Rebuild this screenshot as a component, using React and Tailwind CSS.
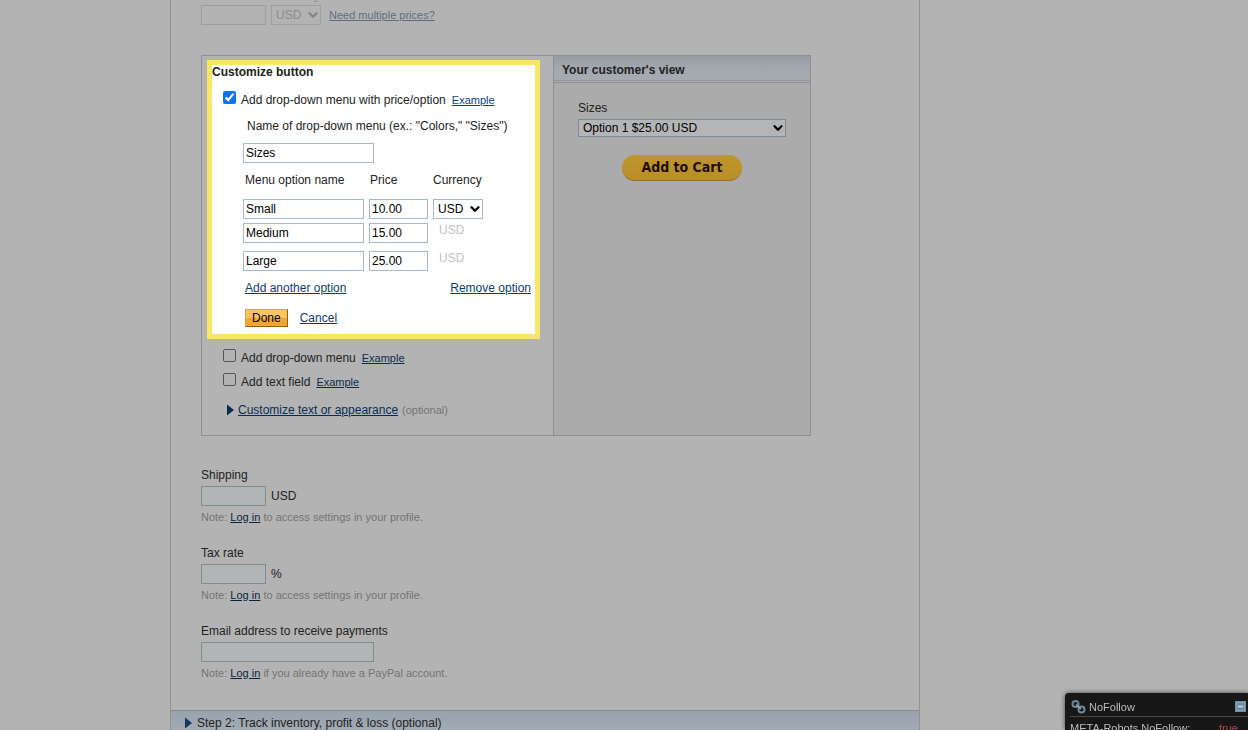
import React, { useState } from 'react';
import { ChevronDown } from 'lucide-react';

const fieldClass = 'h-5 border px-0.5';

const Link = ({ children, small, className = '' }) => (
  <a href="#" className={`underline ${small ? 'text-[11px]' : ''} ${className}`}>
    {children}
  </a>
);

const Triangle = () => (
  <svg width="7" height="12" viewBox="0 0 7 12" className="shrink-0" aria-hidden="true">
    <path d="M0 0.5 L7 6 L0 11.5 Z" fill="currentColor" />
  </svg>
);

const Select = ({ id, label, disabled, options, className, arrow }) => (
  <div className="relative">
    <select
      id={id}
      aria-label={label}
      disabled={disabled}
      className={`block w-full appearance-none border pl-1 ${className}`}
    >
      {options.map((option) => (
        <option key={option}>{option}</option>
      ))}
    </select>
    <ChevronDown
      size={14}
      strokeWidth={4}
      className={`pointer-events-none absolute right-px top-1/2 -translate-y-1/2 ${arrow}`}
    />
  </div>
);

// Unticked option below the open editor
const CheckRow = ({ id, label }) => (
  <div className="flex items-start pl-[21px]">
    <input
      id={id}
      type="checkbox"
      className="mr-[5px] size-[13px] shrink-0 appearance-none rounded-xs border border-[#555] checked:bg-[#0d6fd8]"
    />
    <label htmlFor={id} className="mr-1.5 pt-0.5">{label}</label>
    <Link small className="pt-0.5 text-[#0b2b57]">Example</Link>
  </div>
);

const ProfileField = ({ id, label, unit, note, wide }) => (
  <div>
    <label htmlFor={id} className="block">{label}</label>
    <div className="mt-1 flex items-center gap-[5px]">
      <input
        id={id}
        type="text"
        className={`${fieldClass} border-[#818c8e] bg-[#b2b5b5] ${wide ? 'w-[173px]' : 'w-[65px]'}`}
      />
      {unit && <span>{unit}</span>}
    </div>
    <p className="mt-1 text-[11px] leading-[14px] text-[#737373]">
      Note: <Link small className="text-[#0a2440]">Log in</Link> {note}
    </p>
  </div>
);

const OptionsEditor = () => {
  const [enabled, setEnabled] = useState(true);
  const [menuName, setMenuName] = useState('Sizes');
  const [rows, setRows] = useState([
    { name: 'Small', price: '10.00' },
    { name: 'Medium', price: '15.00' },
    { name: 'Large', price: '25.00' },
  ]);

  const updateRow = (index, key, value) => {
    setRows(rows.map((row, i) => (i === index ? { ...row, [key]: value } : row)));
  };

  return (
    <section className="ml-[5px] mr-[13px] mt-1 border-5 border-[#f8e765] bg-white pb-[7px] text-[#222]">
      <h2 className="font-bold">Customize button</h2>

      <div className="mt-3 flex items-start pl-[11px]">
        <input
          id="price-menu"
          type="checkbox"
          checked={enabled}
          onChange={(e) => setEnabled(e.target.checked)}
          className="mr-[5px] size-[13px] shrink-0 accent-[#0d74f0]"
        />
        <label htmlFor="price-menu" className="mr-1.5 pt-0.5">
          Add drop-down menu with price/option
        </label>
        <Link small className="pt-0.5 text-[#084482]">Example</Link>
      </div>

      <div className="pl-[31px] pr-1">
        <label htmlFor="menu-name" className="mt-3 block pl-1">
          Name of drop-down menu (ex.: "Colors," "Sizes")
        </label>
        <input
          id="menu-name"
          type="text"
          value={menuName}
          onChange={(e) => setMenuName(e.target.value)}
          className={`${fieldClass} mt-2.5 block w-[131px] border-[#a9b8c8] text-black`}
        />

        <table className="mt-2.5">
          <thead>
            <tr className="text-left">
              <th className="p-0 pb-3 pl-0.5 font-normal">Menu option name</th>
              <th className="p-0 pb-3 pl-px font-normal">Price</th>
              <th className="p-0 pb-3 font-normal">Currency</th>
            </tr>
          </thead>
          <tbody>
            {rows.map((row, i) => (
              <tr key={i} className="align-top">
                <td className={`p-0 pr-[5px] ${i === 0 ? 'pb-1' : i === 1 ? 'pb-2' : ''}`}>
                  <input
                    type="text"
                    aria-label={`Option ${i + 1} name`}
                    value={row.name}
                    onChange={(e) => updateRow(i, 'name', e.target.value)}
                    className={`${fieldClass} block w-[121px] border-[#a9b8c8] text-black`}
                  />
                </td>
                <td className="p-0 pr-[5px]">
                  <input
                    type="text"
                    aria-label={`Option ${i + 1} price`}
                    value={row.price}
                    onChange={(e) => updateRow(i, 'price', e.target.value)}
                    className={`${fieldClass} block w-[59px] border-[#a9b8c8] text-black`}
                  />
                </td>
                <td className="p-0">
                  {i === 0 ? (
                    <Select
                      label="Currency"
                      options={['USD', 'EUR', 'GBP']}
                      className="h-5 min-w-[50px] border-[#a9b8c8] text-black"
                      arrow="text-black"
                    />
                  ) : (
                    <span className="block pl-1.5 text-[#c2c2c2]">USD</span>
                  )}
                </td>
              </tr>
            ))}
          </tbody>
        </table>

        <div className="mt-2.5 flex justify-between pl-0.5 text-[#0c3c74]">
          <Link>Add another option</Link>
          <Link>Remove option</Link>
        </div>
        <div className="mt-3.5 flex items-center gap-3 pl-0.5 text-[#0c3c74]">
          <button
            type="button"
            className="h-[18px] border border-[#d5a35c] border-b-[#935e0d] border-r-[#935e0d] bg-linear-to-b from-[#fcc363] from-50% to-[#f3a530] to-50% px-1.5 text-black"
          >
            Done
          </button>
          <Link>Cancel</Link>
        </div>
      </div>
    </section>
  );
};

const CustomerView = () => (
  <aside className="w-[257px] shrink-0 border-l border-[#8d8f94] bg-[#ababab]">
    <div className="border-b border-[#8e9199] pb-px">
      <h2 className="border-b border-[#96989f] bg-linear-to-b from-[#979ba2] via-[#a2a8ae] to-[#a6abb0] pb-[3px] pl-2 pt-[7px] font-bold text-[#222]">
        Your customer's view
      </h2>
    </div>
    <div className="px-6 pt-[18px]">
      <label htmlFor="preview-size" className="mb-1 block">Sizes</label>
      <Select
        id="preview-size"
        options={['Option 1 $25.00 USD', 'Option 2 $25.00 USD', 'Option 3 $25.00 USD']}
        className="h-[18px] border-[#7e8b98] bg-[#b5b5b5] text-black"
        arrow="text-black"
      />
      <button
        type="button"
        className="mx-auto mt-[18px] block h-[26px] w-[120px] rounded-full border-b border-[#93701f] bg-linear-to-b from-[#bd962c] to-[#b98f25] font-['DejaVu_Sans_Condensed','DejaVu_Sans',sans-serif] text-[14px] font-bold leading-[25px] text-[#210d05]"
      >
        Add to Cart
      </button>
    </div>
  </aside>
);

// Robots status bubble of the browser add-on
const NoFollowBox = () => (
  <div className="fixed bottom-0 right-0 h-[37px] w-[183px] overflow-hidden rounded-tl-sm bg-[#171717] pl-[5px] text-[11px] text-[#bcbcbc] shadow-[0_0_5px_#444]">
    <div className="flex h-6 items-center border-b border-[#484848] pr-0.5 pt-1">
      <svg width="18" height="16" viewBox="0 0 18 16" fill="none" className="mr-px" aria-hidden="true">
        <circle cx="5.5" cy="5" r="3" stroke="#6d8799" strokeWidth="2" />
        <circle cx="11.5" cy="10.5" r="3" stroke="#6d8799" strokeWidth="2" />
        <path d="M6 5.5 L11 10" stroke="#92a8b5" strokeWidth="1.6" />
      </svg>
      <span>NoFollow</span>
      <button type="button" aria-label="Minimize" className="ml-auto">
        <svg width="11" height="11" viewBox="0 0 11 11" className="block">
          <rect width="11" height="11" fill="#6d8ea3" />
          <rect x="1.5" y="1.5" width="8" height="8" fill="none" stroke="#87a4b5" />
          <path d="M3 5.5 H8" stroke="#d5dde2" strokeWidth="1.4" />
        </svg>
      </button>
    </div>
    <div className="flex justify-between pr-2.5 pt-1">
      <span>META-Robots NoFollow:</span>
      <span className="text-[#b64a4a]">true</span>
    </div>
  </div>
);

const App = () => {
  return (
    <div className="h-screen overflow-hidden bg-[#b3b3b3] pl-[170px] font-['Liberation_Sans',Arial,sans-serif] text-[12px] leading-[14px] text-[#222]">
      <main className="min-h-screen max-w-[750px] border-x border-[#909194]">
        <div className="px-[30px]">
          {/* Price row, disabled while option prices are in use */}
          <div className="-mt-3 pl-[70px] text-[#8c8c8c]">
            <label htmlFor="currency">Currency</label>
          </div>
          <div className="mt-[3px] flex items-center gap-[5px] text-[#8c8c8c]">
            <input type="text" aria-label="Price" disabled className={`${fieldClass} w-[65px] border-[#9a9c9e]`} />
            <Select
              id="currency"
              disabled
              options={['USD']}
              className="h-5 min-w-[50px] border-[#9d9fa1]"
              arrow="text-[#858585]"
            />
            <Link small className="ml-[3px] text-[#5f6f80]">Need multiple prices?</Link>
          </div>

          <div className="mt-[30px] flex max-w-[610px] border border-[#8d8f94]">
            <div className="grow pb-[18px]">
              <OptionsEditor />
              <div className="mt-2.5">
                <CheckRow id="plain-menu" label="Add drop-down menu" />
              </div>
              <div className="mt-2">
                <CheckRow id="text-field" label="Add text field" />
              </div>
              <div className="mt-3.5 flex items-center gap-1 pl-[25px] text-[#0b2b57]">
                <Triangle />
                <Link>Customize text or appearance</Link>
                <span className="text-[11px] text-[#737373]">(optional)</span>
              </div>
            </div>
            <CustomerView />
          </div>

          <div className="mt-8 flex flex-col gap-[22px]">
            <ProfileField id="shipping" label="Shipping" unit="USD" note="to access settings in your profile." />
            <ProfileField id="tax" label="Tax rate" unit="%" note="to access settings in your profile." />
            <ProfileField
              id="email"
              label="Email address to receive payments"
              note="if you already have a PayPal account."
              wide
            />
          </div>
        </div>

        <div className="mt-[30px] flex h-7 items-start gap-[5px] border-t border-[#868b8d] bg-linear-to-b from-[#98a3ae] to-[#a6adb5] pl-3.5 pt-[5px]">
          <span className="pt-px text-[#173a5c]"><Triangle /></span>
          <span>Step 2: Track inventory, profit &amp; loss (optional)</span>
        </div>
      </main>

      <NoFollowBox />
    </div>
  );
};

export default App;
